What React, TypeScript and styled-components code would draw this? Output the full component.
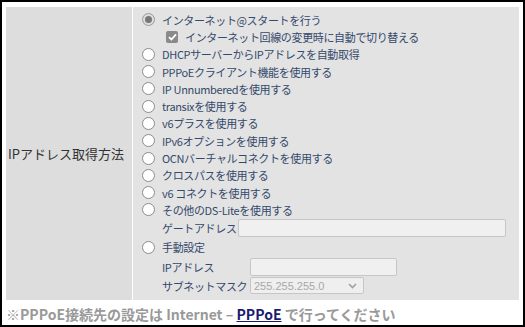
import React from 'react';
import styled, { createGlobalStyle } from 'styled-components';

const GlobalStyle = createGlobalStyle`
  body {
    margin: 0;
    background: #fff;
    font-family: "Noto Sans CJK JP", "Liberation Sans", sans-serif;
  }
`;

const Frame = styled.div`
  width: 525px;
  height: 327px;
  box-sizing: border-box;
  border: 2px solid #000;
  padding: 5px 4px 0 4px;
  background: #fff;
`;

const Table = styled.div`
  display: grid;
  grid-template-columns: 126px 1fr;
  column-gap: 1px;
  height: 293px;
`;

const HeadCell = styled.div`
  background: #dddddd;
  display: flex;
  align-items: center;
  padding-left: 2px;
  font-size: 13px;
  color: #333;
`;

const BodyCell = styled.div`
  background: #e3e3e3;
  padding: 4px 0 0 9px;
`;

const Row = styled.label<{ $indent?: number; $h?: number }>`
  display: flex;
  align-items: center;
  height: ${(p) => p.$h ?? 17.3}px;
  padding-left: ${(p) => p.$indent ?? 0}px;
  font-size: 11px;
  letter-spacing: -0.35px;
  color: #34496b;
  white-space: nowrap;
`;

const Radio = styled.span<{ $on?: boolean }>`
  width: 13px;
  height: 13px;
  box-sizing: border-box;
  border-radius: 50%;
  border: 1px solid ${(p) => (p.$on ? '#9a9a9a' : '#8c8c8c')};
  background: ${(p) => (p.$on ? '#dcdcdc' : '#fff')};
  margin-right: 7px;
  display: flex;
  align-items: center;
  justify-content: center;
  flex-shrink: 0;
  &::after {
    content: '';
    display: ${(p) => (p.$on ? 'block' : 'none')};
    width: 7px;
    height: 7px;
    border-radius: 50%;
    background: #777;
  }
`;

const Check = styled.span`
  width: 12px;
  height: 12px;
  border-radius: 2px;
  background: #8a8a8a;
  margin-right: 7px;
  display: flex;
  align-items: center;
  justify-content: center;
`;

const FieldRow = styled.div<{ $h: number }>`
  display: grid;
  grid-template-columns: 88px auto;
  align-items: center;
  height: ${(p) => p.$h}px;
  padding-left: 20px;
  font-size: 11px;
  letter-spacing: -0.35px;
  color: #34496b;
  white-space: nowrap;
`;

const GateRow = styled(FieldRow)`
  grid-template-columns: 76px auto;
`;

const Input = styled.div<{ $w: number }>`
  width: ${(p) => p.$w}px;
  height: 18px;
  box-sizing: border-box;
  border: 1px solid #c6c6c6;
  border-radius: 2px;
  background: #f0f0f0;
`;

const Select = styled.div`
  width: 114px;
  height: 17px;
  box-sizing: border-box;
  border: 1px solid #c6c6c6;
  border-radius: 2px;
  background: #efefef;
  display: flex;
  align-items: center;
  justify-content: space-between;
  padding: 0 6px 0 3px;
  font-family: "Liberation Sans", sans-serif;
  font-size: 11px;
  letter-spacing: 0;
  color: #a8a8a8;
`;

const Note = styled.div`
  margin-top: 4px;
  padding-left: 0;
  font-size: 14px;
  font-weight: bold;
  color: #999;
  white-space: nowrap;
  a {
    color: #1a1a6e;
    text-decoration: underline;
  }
`;

const options = [
  'DHCPサーバーからIPアドレスを自動取得',
  'PPPoEクライアント機能を使用する',
  'IP Unnumberedを使用する',
  'transixを使用する',
  'v6プラスを使用する',
  'IPv6オプションを使用する',
  'OCNバーチャルコネクトを使用する',
  'クロスパスを使用する',
  'v6 コネクトを使用する',
  'その他のDS-Liteを使用する',
];

const App = () => {
  return (
    <>
      <GlobalStyle />
      <Frame>
        <Table>
          <HeadCell>IPアドレス取得方法</HeadCell>
          <BodyCell>
            <Row>
              <Radio $on />
              インターネット@スタートを行う
            </Row>
            <Row $indent={24}>
              <Check>
                <svg width="9" height="8" viewBox="0 0 9 8">
                  <path d="M1 4.2 L3.4 6.5 L8 1.3" fill="none" stroke="#fff" strokeWidth="1.8" />
                </svg>
              </Check>
              インターネット回線の変更時に自動で切り替える
            </Row>
            {options.map((o) => (
              <Row key={o}>
                <Radio />
                {o}
              </Row>
            ))}
            <GateRow $h={19}>
              <span>ゲートアドレス</span>
              <Input $w={268} />
            </GateRow>
            <Row $h={19.5}>
              <Radio />
              手動設定
            </Row>
            <FieldRow $h={19}>
              <span>IPアドレス</span>
              <Input $w={147} />
            </FieldRow>
            <FieldRow $h={19}>
              <span>サブネットマスク</span>
              <Select>
                <span>255.255.255.0</span>
                <svg width="9" height="6" viewBox="0 0 9 6">
                  <path d="M1 1 L4.5 4.5 L8 1" fill="none" stroke="#a0a0a0" strokeWidth="1.6" />
                </svg>
              </Select>
            </FieldRow>
          </BodyCell>
        </Table>
        <Note>
          ※PPPoE接続先の設定は Internet – <a href="#">PPPoE</a> で行ってください
        </Note>
      </Frame>
    </>
  );
};

export default App;
